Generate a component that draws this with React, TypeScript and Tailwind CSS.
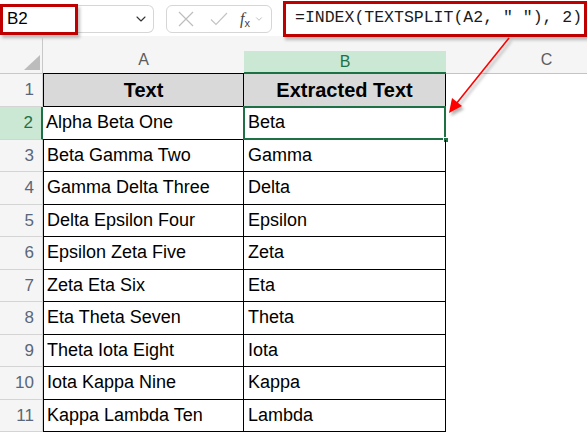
import { ChevronDown } from "lucide-react";

const rows = [
  ["Alpha Beta One", "Beta"],
  ["Beta Gamma Two", "Gamma"],
  ["Gamma Delta Three", "Delta"],
  ["Delta Epsilon Four", "Epsilon"],
  ["Epsilon Zeta Five", "Zeta"],
  ["Zeta Eta Six", "Eta"],
  ["Eta Theta Seven", "Theta"],
  ["Theta Iota Eight", "Iota"],
  ["Iota Kappa Nine", "Kappa"],
  ["Kappa Lambda Ten", "Lambda"],
];

function Toolbar ()
{
  return (
    <div className="relative flex h-[36px] items-center gap-[12px] pt-[1px]">
      <div className="relative flex h-[28px] w-[154px] items-center justify-between rounded-r-[6px] border border-l-0 border-[#d6d6d6] pl-[7px] pr-[4px]">
        <span className="text-[17px] text-black">B2</span>
        <ChevronDown size={16} strokeWidth={1.6} className="text-[#333]" />
        {/* callout box */}
        <div className="absolute left-0 top-[-2px] h-[31px] w-[78px] border-[3px] border-[#c00000] shadow-[2px_3px_3px_rgba(0,0,0,0.25)]" />
      </div>
      <div className="flex h-[28px] w-[106px] items-center rounded-[6px] border border-[#d6d6d6] pl-[10px]">
        <svg width="16" height="16" viewBox="0 0 16 16" className="ml-[1px]">
          <path d="M1 1 L15 15 M15 1 L1 15" stroke="#bdbdbd" strokeWidth="1.2" fill="none" />
        </svg>
        <svg width="18" height="14" viewBox="0 0 18 14" className="ml-[16px]">
          <path d="M1 7.5 L6 12.5 L17 1" stroke="#c4c4c4" strokeWidth="1.2" fill="none" />
        </svg>
        <span className="ml-[12px] font-['Liberation_Serif'] text-[16px] italic leading-none text-[#444]">
          f<span className="text-[11px] not-italic font-['Liberation_Sans'] relative top-[3px]">x</span>
        </span>
        <ChevronDown size={10} strokeWidth={1.5} className="ml-[4px] text-[#999]" />
      </div>
      <div className="ml-[-1px] flex h-[36px] flex-1 items-center border-[3px] border-[#c00000] pl-[9px] shadow-[2px_3px_3px_rgba(0,0,0,0.25)]">
        <span className="whitespace-pre font-['Liberation_Mono'] text-[16.5px] text-[#1a1a1a]">
          =INDEX(TEXTSPLIT(A2, " "), 2)
        </span>
      </div>
    </div>
  );
}

function ColumnHeaders ()
{
  return (
    <div className="flex h-[38px] bg-[#f5f5f5]">
      <div className="relative w-[43px] shrink-0 border-r border-b border-[#c8c8c8]">
        <svg width="16" height="15" viewBox="0 0 16 15" className="absolute left-[24px] top-[19px]">
          <path d="M16 0 L16 15 L0 15 Z" fill="#bcbcbc" />
        </svg>
      </div>
      <div className="flex w-[201px] shrink-0 items-end justify-center border-b border-black pb-[2px]">
        <span className="text-[16px] leading-[22px] text-[#5c5c5c]">A</span>
      </div>
      <div className="mt-[15px] flex w-[202px] shrink-0 items-center justify-center border-b-2 border-[#1e7145] bg-[#cbe8d5]">
        <span className="text-[16px] leading-[20px] text-[#1e7145]">B</span>
      </div>
      <div className="flex w-[201px] shrink-0 items-end justify-center border-b border-[#c4c4c4] pb-[2px]">
        <span className="text-[16px] leading-[22px] text-[#5c5c5c]">C</span>
      </div>
    </div>
  );
}

export default function App ()
{
  return (
    <div className="relative h-[437px] w-[587px] overflow-hidden bg-white font-['Liberation_Sans',Arial,sans-serif]">
      <Toolbar />
      <ColumnHeaders />

      <div className="flex h-[33px]">
        <div className="flex w-[43px] items-center justify-end border-r border-b border-[#d4d4d4] bg-[#f5f5f5] pr-[8px] text-[17px] text-[#5a6778]">1</div>
        <div className="flex w-[201px] items-center justify-center border-b border-r border-l border-black bg-[#d9d9d9] text-[20px] font-bold text-black">Text</div>
        <div className="flex w-[202px] items-center justify-center border-b border-r border-black bg-[#d9d9d9] text-[20px] font-bold text-black">Extracted Text</div>
      </div>

      {rows.map(([a, b], i) => (
        <div key={a} className="flex h-[32.5px]">
          <div
            className={
              i === 0
                ? "flex w-[43px] items-center justify-end border-b border-r-2 border-b-[#d4d4d4] border-r-[#1e7145] bg-[#cbe8d5] pr-[8px] text-[17px] text-[#1e7145]"
                : "flex w-[43px] items-center justify-end border-b border-r border-[#d4d4d4] bg-[#f5f5f5] pr-[8px] text-[17px] text-[#5a6778]"
            }
          >
            {i + 2}
          </div>
          <div className={i === 0 ? "flex w-[201px] items-center border-b border-r border-black pl-[3px] text-[18px] text-black" : "flex w-[201px] items-center border-b border-r border-l border-black pl-[3px] text-[18px] text-black"}>{a}</div>
          <div className="relative flex w-[202px] items-center border-b border-r border-black pl-[4px] text-[18px] text-black">
            {b}
            {i === 0 && (
              <>
                <div className="absolute left-[-1px] top-[-1px] bottom-[-1px] right-[-1px] border-2 border-[#1e7145]" />
                <div className="absolute bottom-[-4px] right-[-4px] h-[6px] w-[6px] border border-white bg-[#1e7145]" />
              </>
            )}
          </div>
        </div>
      ))}

      {/* annotation arrow */}
      <svg className="pointer-events-none absolute left-0 top-0" width="587" height="437">
        <defs>
          <filter id="sh" x="-20%" y="-20%" width="140%" height="140%">
            <feDropShadow dx="2" dy="3" stdDeviation="1.5" floodColor="#000" floodOpacity="0.3" />
          </filter>
        </defs>
        <g filter="url(#sh)">
          <line x1="509" y1="38" x2="456" y2="104" stroke="#ff0000" strokeWidth="1.6" />
          <path d="M449 113 L452 98 L462 106 Z" fill="#ff0000" />
        </g>
      </svg>
    </div>
  );
}
